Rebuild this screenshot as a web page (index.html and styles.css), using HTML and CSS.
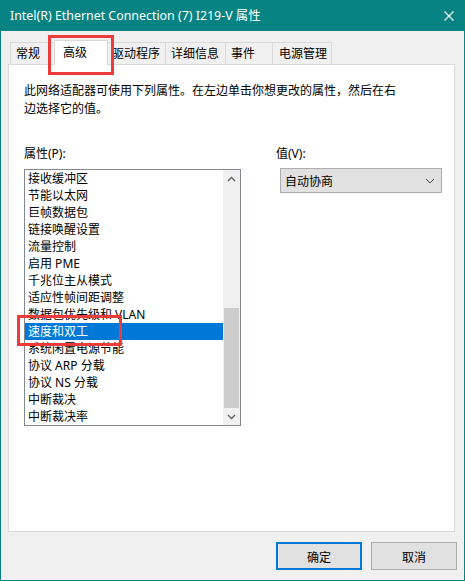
FILE: index.html
```html
<!DOCTYPE html>
<html lang="zh-CN">
<head>
<meta charset="utf-8">
<title>Intel(R) Ethernet Connection (7) I219-V 属性</title>
<link rel="stylesheet" href="styles.css">
</head>
<body>
<div class="window">
  <div class="titlebar">
    <span class="title">Intel(R) Ethernet Connection (7) I219-V 属性</span>
    <svg class="close" width="10" height="10" viewBox="0 0 10 10"><path d="M0.5 0.5 L9.5 9.5 M9.5 0.5 L0.5 9.5" stroke="#fff" stroke-width="1.1" fill="none"/></svg>
  </div>
  <div class="body">
    <div class="tabs">
      <div class="tab w48">常规</div>
      <div class="tab active">高级</div>
      <div class="tab w60">驱动程序</div>
      <div class="tab w61">详细信息</div>
      <div class="tab w48">事件</div>
      <div class="tab w60 pad6">电源管理</div>
    </div>
    <div class="panel">
      <p class="desc">此网络适配器可使用下列属性。在左边单击你想更改的属性，然后在右<br>边选择它的值。</p>
      <div class="fields">
        <div class="col">
          <div class="label">属性(P):</div>
          <div class="listbox">
            <ul class="items">
              <li>接收缓冲区</li>
              <li>节能以太网</li>
              <li>巨帧数据包</li>
              <li>链接唤醒设置</li>
              <li>流量控制</li>
              <li>启用 PME</li>
              <li>千兆位主从模式</li>
              <li>适应性帧间距调整</li>
              <li>数据包优先级和 VLAN</li>
              <li class="selected">速度和双工</li>
              <li>系统闲置电源节能</li>
              <li>协议 ARP 分载</li>
              <li>协议 NS 分载</li>
              <li>中断裁决</li>
              <li>中断裁决率</li>
            </ul>
            <div class="scrollbar">
              <div class="arrow"><svg width="9" height="6" viewBox="0 0 9 6"><path d="M1 5 L4.5 1.5 L8 5" stroke="#606060" stroke-width="1.4" fill="none"/></svg></div>
              <div class="track">
                <div class="thumb"></div>
              </div>
              <div class="arrow"><svg width="9" height="6" viewBox="0 0 9 6"><path d="M1 1 L4.5 4.5 L8 1" stroke="#606060" stroke-width="1.4" fill="none"/></svg></div>
            </div>
          </div>
        </div>
        <div class="col">
          <div class="label">值(V):</div>
          <div class="select">
            <span>自动协商</span>
            <svg width="10" height="6" viewBox="0 0 10 6"><path d="M1 1 L5 5 L9 1" stroke="#444" stroke-width="1" fill="none"/></svg>
          </div>
        </div>
      </div>
    </div>
    <div class="buttons">
      <div class="btn default">确定</div>
      <div class="btn">取消</div>
    </div>
  </div>
  <div class="mark mark-tab"></div>
  <div class="mark mark-item"></div>
</div>
</body>
</html>
```
FILE: styles.css
```css
* { box-sizing: border-box; }
html, body { margin: 0; padding: 0; }
body {
  font-family: "Noto Sans", "Noto Sans CJK SC", sans-serif;
  font-size: 12px;
  color: #000;
  background: #f0f0f0;
}
.window {
  position: relative;
  width: 465px;
  height: 581px;
  background: #f0f0f0;
  border: 1px solid #068382;
  border-top: 0;
  overflow: hidden;
}
.titlebar {
  height: 31px;
  background: #068382;
  display: flex;
  align-items: center;
  justify-content: space-between;
  padding: 0 10px 0 9px;
  color: #fff;
}
.title {
  font-family: "Noto Sans", "Noto Sans CJK SC", sans-serif;
  font-size: 12.4px;
  line-height: 31px;
}
.close { display: block; }
.body {
  padding: 11px 9px 0 7px;
}
.tabs {
  display: flex;
  height: 22px;
  margin-left: 2px;
  position: relative;
  z-index: 2;
}
.tab {
  height: 22px;
  border: 1px solid #d9d9d9;
  border-bottom: 0;
  background: #f0f0f0;
  margin-right: -1px;
  padding-left: 5px;
  font-family: "Noto Sans CJK SC", sans-serif;
  line-height: 20px;
  white-space: nowrap;
}
.w48 { width: 48px; }
.w60 { width: 60px; }
.w61 { width: 61px; }
.pad6 { padding-left: 6px; }
.tab.active {
  width: 54px;
  height: 25px;
  margin-top: -2px;
  margin-left: -3px;
  margin-right: -2px;
  padding-left: 8px;
  background: #fff;
  line-height: 22px;
  position: relative;
  z-index: 3;
}
.panel {
  position: relative;
  z-index: 1;
  height: 468px;
  background: #fff;
  border: 1px solid #d9d9d9;
  padding: 16px 0 0 15px;
}
.desc {
  margin: 0;
  font-family: "Noto Sans CJK SC", sans-serif;
  line-height: 18px;
}
.fields {
  display: grid;
  grid-template-columns: 217px 1fr;
  column-gap: 35px;
  margin-top: 28px;
}
.label {
  line-height: 18px;
  height: 18px;
}
.listbox {
  margin-top: 6px;
  width: 217px;
  height: 257px;
  border: 1px solid #828790;
  display: flex;
}
.items {
  list-style: none;
  margin: 0;
  padding: 0;
  width: 198px;
}
.items li {
  height: 17px;
  line-height: 17px;
  padding-left: 3px;
  white-space: nowrap;
}
.items li.selected {
  background: #0078d7;
  color: #fff;
}
.scrollbar {
  width: 17px;
  display: flex;
  flex-direction: column;
  background: #f0f0f0;
}
.arrow {
  height: 17px;
  display: flex;
  align-items: center;
  justify-content: center;
}
.track {
  flex: 1;
  display: flex;
  flex-direction: column;
  justify-content: flex-end;
}
.thumb {
  height: 100px;
  margin: 0 1px;
  background: #cdcdcd;
}
.select {
  margin-top: 5px;
  margin-left: 4px;
  width: 162px;
  height: 25px;
  background: #e1e1e1;
  border: 1px solid #adadad;
  display: flex;
  align-items: center;
  justify-content: space-between;
  padding: 0 6px 0 4px;
  font-family: "Noto Sans CJK SC", sans-serif;
}
.select svg { display: block; }
.buttons {
  display: flex;
  justify-content: flex-end;
  gap: 9px;
  margin-top: 10px;
  margin-right: -2px;
}
.btn {
  width: 86px;
  height: 28px;
  background: #e1e1e1;
  border: 1px solid #adadad;
  display: flex;
  align-items: center;
  justify-content: center;
  font-family: "Noto Sans CJK SC", sans-serif;
}
.btn.default {
  border: 2px solid #0078d7;
}
.mark {
  position: absolute;
  border: 3px solid #ec3b3b;
  z-index: 10;
}
.mark-tab {
  left: 47px;
  top: 35px;
  width: 66px;
  height: 40px;
}
.mark-item {
  left: 16px;
  top: 315px;
  width: 105px;
  height: 31px;
}
```
